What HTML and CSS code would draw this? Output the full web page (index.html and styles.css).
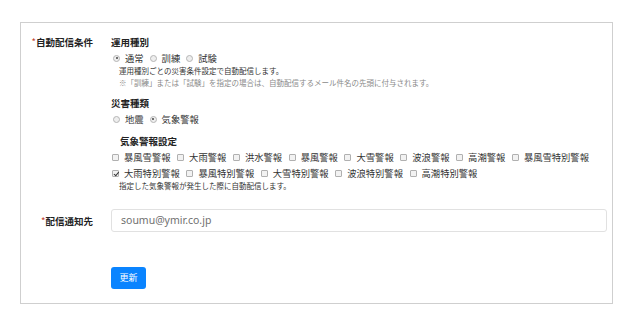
FILE: index.html
```html
<!DOCTYPE html>
<html lang="ja">
<head>
<meta charset="utf-8">
<link rel="stylesheet" href="styles.css">
</head>
<body>
<div class="panel">
  <div class="row row-cond">
    <div class="label"><span class="req">*</span>自動配信条件</div>
    <div class="content">
      <div class="heading">運用種別</div>
      <div class="choices">
        <label class="opt"><span class="radio on"></span>通常</label>
        <label class="opt"><span class="radio"></span>訓練</label>
        <label class="opt"><span class="radio"></span>試験</label>
      </div>
      <div class="note">運用種別ごとの災害条件設定で自動配信します。</div>
      <div class="note gray">※「訓練」または「試験」を指定の場合は、自動配信するメール件名の先頭に付与されます。</div>

      <div class="heading h2">災害種類</div>
      <div class="choices">
        <label class="opt"><span class="radio"></span>地震</label>
        <label class="opt"><span class="radio on"></span>気象警報</label>
      </div>

      <div class="subheading">気象警報設定</div>
      <div class="checks">
        <label class="chk"><span class="box"></span>暴風雪警報</label>
        <label class="chk"><span class="box"></span>大雨警報</label>
        <label class="chk"><span class="box"></span>洪水警報</label>
        <label class="chk"><span class="box"></span>暴風警報</label>
        <label class="chk"><span class="box"></span>大雪警報</label>
        <label class="chk"><span class="box"></span>波浪警報</label>
        <label class="chk"><span class="box"></span>高潮警報</label>
        <label class="chk"><span class="box"></span>暴風雪特別警報</label>
      </div>
      <div class="checks row2">
        <label class="chk"><span class="box on"></span>大雨特別警報</label>
        <label class="chk"><span class="box"></span>暴風特別警報</label>
        <label class="chk"><span class="box"></span>大雪特別警報</label>
        <label class="chk"><span class="box"></span>波浪特別警報</label>
        <label class="chk"><span class="box"></span>高潮特別警報</label>
      </div>
      <div class="note">指定した気象警報が発生した際に自動配信します。</div>
    </div>
  </div>

  <div class="row row-mail">
    <div class="label"><span class="req">*</span>配信通知先</div>
    <div class="content">
      <div class="input">soumu@ymir.co.jp</div>
    </div>
  </div>

  <div class="row row-btn">
    <div class="label"></div>
    <div class="content">
      <button class="btn">更新</button>
    </div>
  </div>
</div>
</body>
</html>
```
FILE: styles.css
```css
* { box-sizing: border-box; }
body {
  margin: 0;
  background: #fff;
  font-family: "Noto Sans CJK JP", "Noto Sans", sans-serif;
  color: #333;
}
.panel {
  margin: 22px 0 0 20px;
  width: 593px;
  height: 282px;
  border: 1px solid #cfcfcf;
  padding-top: 12px;
}
.row {
  display: flex;
  gap: 18px;
}
.label {
  width: 72px;
  flex: none;
  text-align: right;
  font-size: 9.5px;
  font-weight: bold;
  line-height: 14px;
  color: #222;
  white-space: nowrap;
}
.req { color: #c0392b; font-weight: normal; }
.content {
  flex: 1;
  padding-right: 5px;
}
.heading {
  font-size: 9.5px;
  font-weight: bold;
  line-height: 12px;
  margin-top: 1px;
  color: #222;
}
.heading.h2 { margin-top: 8px; }
.subheading {
  font-size: 9.5px;
  font-weight: bold;
  line-height: 12px;
  margin-top: 9px;
  margin-left: 9px;
  color: #222;
}
.choices {
  display: flex;
  gap: 6px;
  margin-top: 3px;
  line-height: 14px;
  font-size: 9.3px;
  padding-left: 2px;
}
.opt {
  display: flex;
  align-items: center;
  gap: 5px;
  color: #333;
}
.radio {
  width: 7px;
  height: 7px;
  border-radius: 50%;
  border: 1px solid #b5b5b5;
  background: #eee;
  position: relative;
}
.radio.on::after {
  content: "";
  position: absolute;
  left: 1.5px;
  top: 1.5px;
  width: 2px;
  height: 2px;
  border-radius: 50%;
  background: #444;
}
.note {
  font-size: 7.5px;
  line-height: 12px;
  margin-left: 8px;
  color: #333;
}
.note.gray { color: #8a8a8a; }
.checks {
  display: flex;
  gap: 6.6px;
  margin-top: 3px;
  line-height: 14px;
  font-size: 9.3px;
  padding-left: 1px;
  white-space: nowrap;
}
.checks.row2 { margin-top: 2px; }
.chk {
  display: flex;
  align-items: center;
  gap: 5px;
  color: #333;
}
.box {
  width: 7px;
  height: 7px;
  border: 1px solid #b0b0b0;
  border-radius: 1px;
  background: #f2f2f2;
  position: relative;
}
.box.on::after {
  content: "";
  position: absolute;
  left: 1.5px;
  top: 0;
  width: 2px;
  height: 3.5px;
  border: solid #333;
  border-width: 0 1.2px 1.2px 0;
  transform: rotate(40deg);
}
.row-mail { margin-top: 17px; align-items: center; }
.input {
  height: 23px;
  border: 1px solid #e1e1e1;
  border-radius: 3px;
  padding: 0 9px;
  font-family: "Noto Sans", sans-serif;
  font-size: 10.5px;
  line-height: 21px;
  color: #707070;
}
.row-btn { margin-top: 30px; }
.btn {
  width: 35px;
  height: 22px;
  border: none;
  border-radius: 3px;
  background: #0a84ff;
  color: #fff;
  font-family: "Noto Sans CJK JP", sans-serif;
  font-size: 9px;
  padding: 0;
}
```
